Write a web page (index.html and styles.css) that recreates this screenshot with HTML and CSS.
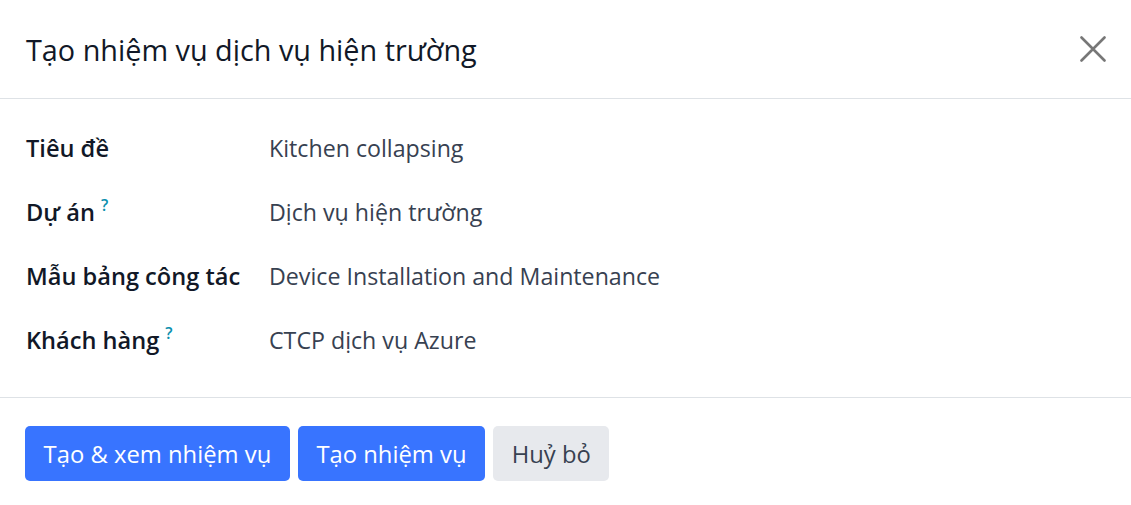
FILE: index.html
```html
<!DOCTYPE html>
<html lang="vi">
<head>
<meta charset="utf-8">
<link rel="stylesheet" href="styles.css">
</head>
<body>
<div class="dialog">
  <header class="dialog-header">
    <h1 class="dialog-title">Tạo nhiệm vụ dịch vụ hiện trường</h1>
    <button class="close-btn" aria-label="Close">
      <svg width="26" height="26" viewBox="0 0 26 26"><path d="M1.5 1.5 L24.5 24.5 M24.5 1.5 L1.5 24.5" stroke="#777" stroke-width="2.6" stroke-linecap="round" fill="none"/></svg>
    </button>
  </header>
  <main class="dialog-body">
    <div class="field">
      <div class="label">Tiêu đề</div>
      <div class="value">Kitchen collapsing</div>
    </div>
    <div class="field">
      <div class="label">Dự án<sup class="help">?</sup></div>
      <div class="value">Dịch vụ hiện trường</div>
    </div>
    <div class="field">
      <div class="label">Mẫu bảng công tác</div>
      <div class="value">Device Installation and Maintenance</div>
    </div>
    <div class="field">
      <div class="label">Khách hàng<sup class="help">?</sup></div>
      <div class="value">CTCP dịch vụ Azure</div>
    </div>
  </main>
  <footer class="dialog-footer">
    <button class="btn btn-primary">Tạo &amp; xem nhiệm vụ</button>
    <button class="btn btn-primary">Tạo nhiệm vụ</button>
    <button class="btn btn-secondary">Huỷ bỏ</button>
  </footer>
</div>
</body>
</html>
```
FILE: styles.css
```css
* { box-sizing: border-box; }
html, body { margin: 0; padding: 0; background: #fff; }
body {
  font-family: "Open Sans", "Noto Sans", sans-serif;
  color: #1f2937;
  width: 1131px;
  height: 505px;
  overflow: hidden;
}
.dialog { display: flex; flex-direction: column; }
.dialog-header {
  height: 99px;
  border-bottom: 1px solid #dee2e6;
  display: flex;
  align-items: center;
  justify-content: space-between;
  padding: 0 25px 0 26px;
}
.dialog-title {
  margin: 0;
  font-size: 28.8px;
  font-weight: 500;
  color: #111827;
}
.close-btn {
  border: 0;
  background: none;
  padding: 0;
  width: 26px;
  height: 26px;
  display: flex;
}
.dialog-body {
  padding: 17px 26px 25px 26px;
  border-bottom: 1px solid #dee2e6;
  display: flex;
  flex-direction: column;
}
.field {
  display: flex;
  height: 64px;
  align-items: center;
}
.label {
  width: 243px;
  font-size: 23.6px;
  font-weight: 600;
  color: #111827;
  line-height: 32px;
}
.help {
  color: #0b8fae;
  font-size: 16px;
  font-weight: 600;
  margin-left: 6px;
  vertical-align: 10px;
  line-height: 0;
}
.value {
  font-size: 23.2px;
  color: #374151;
  line-height: 32px;
}
.dialog-footer {
  display: flex;
  gap: 8px;
  padding: 28px 25px;
}
.btn {
  height: 55px;
  border: 0;
  border-radius: 5px;
  font-family: inherit;
  font-size: 23.8px;
  font-weight: 500;
  padding: 0 18.6px;
}
.btn-primary { background: #3874ff; color: #fff; }
.btn-secondary { background: #e7e9ed; color: #374151; }
```
